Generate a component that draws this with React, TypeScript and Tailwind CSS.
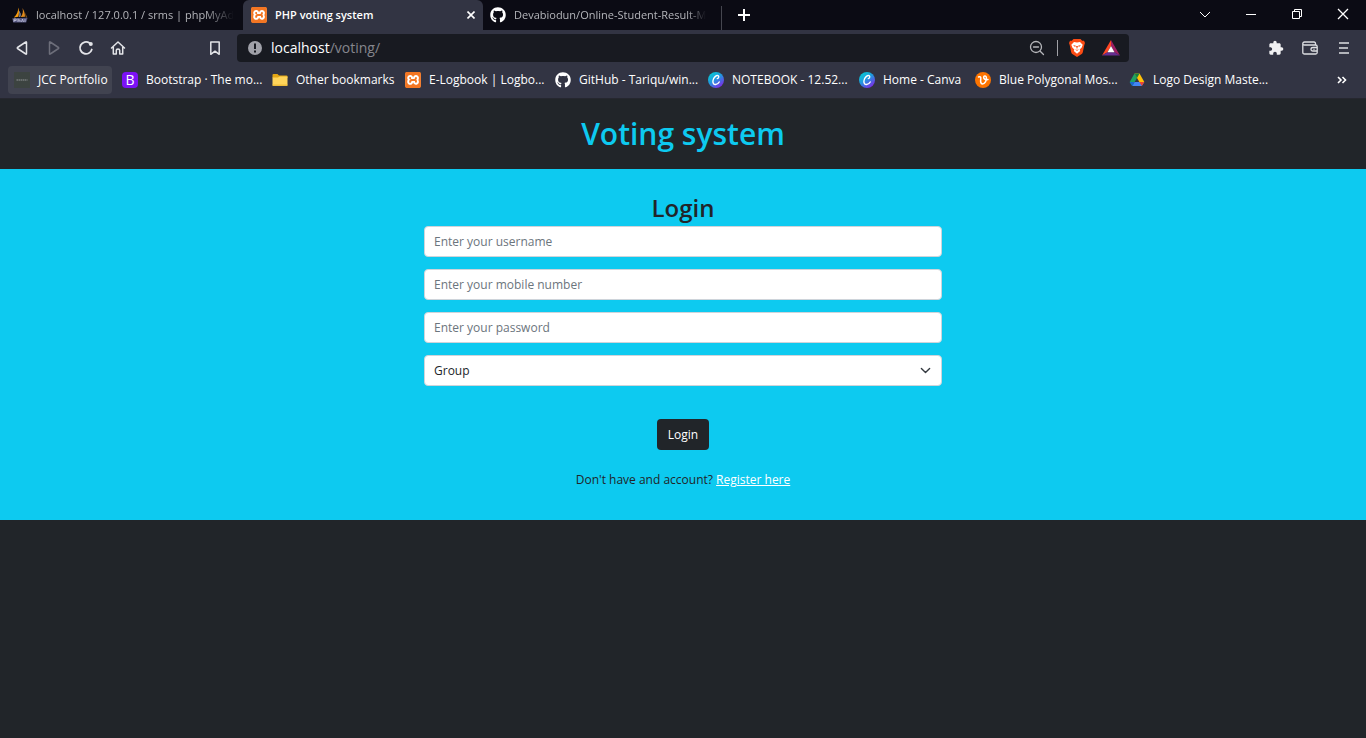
import type { ReactNode } from "react";
import { FaGithub } from "react-icons/fa";
import { SiXampp } from "react-icons/si";
import { MdExtension } from "react-icons/md";

function PhpMyAdminIcon() {
  return (
    <svg className="size-4 shrink-0" viewBox="0 0 16 16">
      <path d="M6.2.5C6.4 4 5 7.500 1.800 10.500L6.400 9.800C7.200 6 7.200 3 6.200.5Z" fill="#f89c0e" />
      <path d="M10.400 1C11.400 4 11 7 8.800 10L13 9.700C13 6.500 12.200 3.500 10.400 1Z" fill="#e08a1c" />
      <path d="M6.800 3.500C7.800 6 7.700 8 7.200 9.800L8.200 9.900C9 7.500 8.600 5.500 6.800 3.500Z" fill="#c8ccd8" />
      <path d="M13.200 5.500L15 10.500L13.800 10.300Z" fill="#b97519" />
      <path d="M.3 11.200L15.600 10.800L14.200 15.400H1.200Z" fill="#55567f" />
      <path d="M2 15V12H4.200V13.500H2M6 11.500V15M6 13H8V15M9.500 15L10.500 12L11.500 15M13 12V15" stroke="#c4c5dc" strokeWidth=".8" fill="none" />
    </svg>
  );
}

function XamppIcon() {
  return (
    <span className="flex size-4 shrink-0 rounded-sm bg-white">
      <SiXampp className="size-4 text-[#f37623]" />
    </span>
  );
}

function GithubIcon() {
  return <FaGithub className="size-4 shrink-0 text-white" />;
}

function PortfolioIcon() {
  return (
    <svg className="size-4 shrink-0" viewBox="0 0 16 16">
      <path d="M0 0H16V16H0Z" fill="#3c4340" />
      <path d="M2.500 8H13.500" stroke="#757b7a" strokeWidth="1.500" strokeDasharray="1.500 .5" />
    </svg>
  );
}

function BootstrapIcon() {
  return (
    <span className="flex size-4 shrink-0 items-center justify-center rounded-sm bg-[#7c12f5] text-sm leading-4 text-white">
      B
    </span>
  );
}

function FolderIcon() {
  return (
    <svg className="size-4 shrink-0" viewBox="0 0 16 16">
      <path d="M.5 3Q.5 2 1.500 2H5.500L7 3.500H14.500Q15.500 3.500 15.500 4.500V6H.5Z" fill="#e3a615" />
      <path d="M.5 5.500H6L7.500 4.500H15.500V13Q15.500 14 14.500 14H1.500Q.5 14 .5 13Z" fill="#ffd45a" />
      <path d="M.5 12.500H15.500V13Q15.500 14 14.500 14H1.500Q.5 14 .5 13Z" fill="#f0bd3a" />
    </svg>
  );
}

function CanvaIcon() {
  return (
    <svg className="size-4 shrink-0" viewBox="0 0 16 16">
      <defs>
        <linearGradient id="canva" x1="0" y1="0" x2=".7" y2="1">
          <stop offset="0" stopColor="#00d8cf" />
          <stop offset=".5" stopColor="#1f9be0" />
          <stop offset="1" stopColor="#7d2ae8" />
        </linearGradient>
      </defs>
      <circle cx="8" cy="8" r="8" fill="url(#canva)" />
      <path d="M9.300 6.600C10.500 6.400 11.200 4.600 10.300 3.800C8.800 2.700 5.200 5.400 4.900 9C4.700 11.500 6 12.600 7.500 12.500C9.200 12.400 10.600 11.200 11.200 10" fill="none" stroke="#fff" strokeWidth="1.400" strokeLinecap="round" />
    </svg>
  );
}

function VecteezyIcon() {
  return (
    <svg className="size-4 shrink-0" viewBox="0 0 16 16">
      <circle cx="8" cy="8" r="8" fill="#fd7400" />
      <path d="M3.500 5C5.200 4.200 6 5 5.800 6.800C5.400 9.200 5.500 11.900 7.500 12C10 12 11.600 8.500 11.400 5.800C11.300 3.500 9 3.300 8.700 5.200C8.500 7.200 10.500 8 13 7.500" fill="none" stroke="#fff" strokeWidth="1.500" strokeLinecap="round" />
    </svg>
  );
}

function DriveIcon() {
  return (
    <svg className="size-4 shrink-0" viewBox="0 0 16 16">
      <path d="M5.500 1.500L8 6L3.200 14L.7 10Z" fill="#1ea362" />
      <path d="M5.500 1.500H10.500L15.300 10H10.300Z" fill="#ffc107" />
      <path d="M5.500 1.500H10.500L8 6Z" fill="#11803f" />
      <path d="M3.200 14L5.500 10H15.300L12.800 14Z" fill="#4285f4" />
      <path d="M10.300 10H15.300L12.800 14Z" fill="#ea4335" />
      <path d="M.7 10H5.500L3.200 14Z" fill="#1967d2" />
    </svg>
  );
}

function BraveIcon() {
  return (
    <svg className="size-5" viewBox="0 0 20 20">
      <path d="M6.500 1H13.500L15.200 2.700L17 2.800L18 5L17.300 7L15.800 14.200Q15.500 15.500 14.300 16.300L10 19L5.700 16.300Q4.500 15.500 4.200 14.200L2.700 7L2 5L3 2.800L4.800 2.700Z" fill="#fb4b14" />
      <path d="M7 4L10 4.600L13 4L15.700 6.800L14.700 9.400L12.700 11.500L13.200 13L10 15.800L6.800 13L7.300 11.500L5.300 9.400L4.300 6.800Z" fill="#fff" />
      <path d="M6 7L9 7.700L8 9ZM14 7L11 7.700L12 9ZM9 8L10 11.300L11 8M8 11L10 13L12 11L10 12Z" fill="#fb4b14" />
    </svg>
  );
}

function BatIcon() {
  return (
    <svg className="size-5" viewBox="0 0 20 20">
      <path d="M10 2L1 17.500L6.500 14.200L10 8Z" fill="#ff4724" />
      <path d="M10 2L19 17.500L13.500 14.200L10 8Z" fill="#9e1f63" />
      <path d="M1 17.500H19L13.500 14.200H6.500Z" fill="#662d91" />
      <path d="M10 8L13.500 14.200H6.500Z" fill="#fff" />
    </svg>
  );
}

function Glyph({ children, className = "text-[#e3e4e8]" }: { children: ReactNode; className?: string }) {
  return (
    <svg
      className={`size-4 ${className}`}
      viewBox="0 0 16 16"
      fill="none"
      stroke="currentColor"
      strokeWidth="1.500"
      strokeLinejoin="round"
      strokeLinecap="round"
    >
      {children}
    </svg>
  );
}

function IconButton({ label, children, disabled }: { label: string; children: ReactNode; disabled?: boolean }) {
  return (
    <button type="button" aria-label={label} disabled={disabled} className="flex h-7 w-8 shrink-0 items-center justify-center">
      {children}
    </button>
  );
}

function WindowButton({ label, children }: { label: string; children: ReactNode }) {
  return (
    <button type="button" aria-label={label} className="flex h-7 w-[46px] shrink-0 items-center justify-center text-white">
      <svg className="size-3" viewBox="0 0 12 12" fill="none" stroke="currentColor">
        {children}
      </svg>
    </button>
  );
}

function TabStrip() {
  return (
    <div className="flex h-[30px] bg-[#0b0b14] text-[11px] text-[#b4b5ba]">
      <button type="button" className="flex w-[243px] items-center gap-2 pl-3 text-left">
        <PhpMyAdminIcon />
        <span className="whitespace-nowrap mask-r-from-85%">localhost / 127.0.0.1 / srms | phpMyAd</span>
      </button>
      <div className="flex w-60 items-center rounded-t-md bg-[#323443] pr-1 pl-2 text-white">
        <button type="button" className="flex flex-1 items-center gap-2 text-left font-semibold">
          <XamppIcon />
          PHP voting system
        </button>
        <button type="button" aria-label="Close tab" className="flex size-4 items-center justify-center">
          <svg className="size-2" viewBox="0 0 8 8" stroke="currentColor" strokeWidth="1.600">
            <path d="M.5 .5L7.500 7.500M7.500 .5L.5 7.500" />
          </svg>
        </button>
      </div>
      <div className="flex w-[239px] items-end">
        <button type="button" className="flex h-full min-w-0 flex-1 items-center gap-2 pr-1 pl-[7px] text-left">
          <GithubIcon />
          <span className="whitespace-nowrap mask-r-from-90%">Devabiodun/Online-Student-Result-M</span>
        </button>
        <span className="h-6 w-px bg-[#45464f]" />
      </div>
      <button type="button" aria-label="New tab" className="flex w-11 items-center justify-center text-white">
        <svg className="size-3" viewBox="0 0 12 12" stroke="currentColor" strokeWidth="2">
          <path d="M6 0V12M0 6H12" />
        </svg>
      </button>
      <div className="ml-auto flex">
        <WindowButton label="Search tabs">
          <path d="M1 4L6 9L11 4" />
        </WindowButton>
        <WindowButton label="Minimize">
          <path d="M1 6.500H11" />
        </WindowButton>
        <WindowButton label="Restore">
          <path d="M1.500 3.500H8.500V10.500H1.500ZM3.500 3.500V1.500H10.500V8.500H8.500" />
        </WindowButton>
        <WindowButton label="Close">
          <path d="M1 1L11 11M11 1L1 11" strokeWidth="1.300" />
        </WindowButton>
      </div>
    </div>
  );
}

function Toolbar() {
  return (
    <div className="flex h-9 items-center px-1.5">
      <IconButton label="Back">
        <Glyph>
          <path d="M12.500 2.300V13.700Q12.500 14.500 11.800 14L3.500 8.500Q2.900 8 3.500 7.500L11.800 2Q12.500 1.500 12.500 2.300Z" />
        </Glyph>
      </IconButton>
      <IconButton label="Forward" disabled>
        <Glyph className="text-[#6d6e7a]">
          <path d="M3.500 2.300V13.700Q3.500 14.500 4.200 14L12.500 8.500Q13.100 8 12.500 7.500L4.200 2Q3.500 1.500 3.500 2.300Z" />
        </Glyph>
      </IconButton>
      <IconButton label="Reload">
        <Glyph>
          <path d="M13.800 9.500A6 6 0 1 1 11.500 3" strokeWidth="1.800" />
          <circle cx="12.800" cy="4" r="2" fill="currentColor" stroke="none" />
        </Glyph>
      </IconButton>
      <IconButton label="Home">
        <Glyph>
          <path d="M1.500 8L8 2L14.500 8M3.300 7V14H6.300V10.200Q6.300 9 8 9T9.700 10.200V14H12.700V7" />
        </Glyph>
      </IconButton>
      <div className="ml-[65px]">
        <IconButton label="Bookmark this page">
          <Glyph>
            <path d="M3.800 2H12.200V14.300L8 11.200L3.800 14.300Z" />
          </Glyph>
        </IconButton>
      </div>
      <div className="ml-1.5 flex h-7 flex-1 items-center rounded bg-[#181a21] pr-px">
        <button type="button" aria-label="Site information" className="flex w-[34px] justify-center pl-0.5">
          <svg className="size-3.5" viewBox="0 0 14 14">
            <circle cx="7" cy="7" r="7" fill="#a0a1a9" />
            <path d="M7 2.500V8M7 9.500V11.500" stroke="#181a21" strokeWidth="2" />
          </svg>
        </button>
        <div className="flex-1 text-sm text-[#85868d]">
          <span className="text-white">localhost</span>/voting/
        </div>
        <IconButton label="Zoom">
          <Glyph className="text-[#b5b6ba]">
            <circle cx="7" cy="7" r="5.500" strokeWidth="1.300" />
            <path d="M11.200 11.200L14.500 14.500M4.500 7H9.500" strokeWidth="1.300" />
          </Glyph>
        </IconButton>
        <span className="mx-1 h-4 w-px bg-[#a0a1a6]" />
        <button type="button" aria-label="Brave Shields" className="flex w-[30px] justify-center">
          <BraveIcon />
        </button>
        <button type="button" aria-label="Brave Rewards" className="ml-0.5 flex w-[34px] justify-center">
          <BatIcon />
        </button>
      </div>
      <div className="ml-[131px] flex gap-0.5">
        <IconButton label="Extensions">
          <MdExtension className="size-4 text-[#f0f0f2]" />
        </IconButton>
        <IconButton label="Wallet">
          <svg className="size-4 text-[#dddee2]" viewBox="0 0 16 16" fill="none" stroke="currentColor" strokeWidth="1.300">
            <path d="M13.500 5V3.500Q13.500 2 12 2H2.500Q.8 2 .8 3.500T2.500 5H13.500Q15.200 5 15.200 6.500V12.500Q15.200 14 13.700 14H2.500Q.8 14 .8 12.500V3.500M15.200 7.500H11Q9 7.500 9 9.300T11 11H15.200M11.500 9.300H12.500" />
          </svg>
        </IconButton>
        <IconButton label="Menu">
          <svg className="size-4 text-[#dddee2]" viewBox="0 0 16 16" stroke="currentColor" strokeWidth="1.600">
            <path d="M3 3H13M3 8H12M3 13H13" />
          </svg>
        </IconButton>
      </div>
    </div>
  );
}

const bookmarks: { label: string; icon: ReactNode; className: string }[] = [
  { label: "JCC Portfolio", icon: <PortfolioIcon />, className: "w-[104px] bg-[#414350]" },
  { label: "Bootstrap · The mo...", icon: <BootstrapIcon />, className: "w-[146px]" },
  { label: "Other bookmarks", icon: <FolderIcon />, className: "w-[129px]" },
  { label: "E-Logbook | Logbo...", icon: <XamppIcon />, className: "w-[146px]" },
  { label: "GitHub - Tariqu/win...", icon: <GithubIcon />, className: "w-[149px]" },
  { label: "NOTEBOOK - 12.52...", icon: <CanvaIcon />, className: "w-[147px]" },
  { label: "Home - Canva", icon: <CanvaIcon />, className: "w-[112px]" },
  { label: "Blue Polygonal Mos...", icon: <VecteezyIcon />, className: "w-[150px]" },
  { label: "Logo Design Maste...", icon: <DriveIcon />, className: "w-[148px]" },
];

function BookmarksBar() {
  return (
    <nav aria-label="Bookmarks" className="flex h-8 items-start gap-1 pr-4 pl-2 text-xs text-white">
      {bookmarks.map((b) => (
        <a key={b.label} href="#" className={`flex h-7 shrink-0 items-center gap-2 rounded pl-1.5 whitespace-nowrap ${b.className}`}>
          {b.icon}
          {b.label}
        </a>
      ))}
      <button type="button" aria-label="More bookmarks" className="ml-auto flex h-7 w-4 items-center justify-center">
        <svg className="size-2.5" viewBox="0 0 10 10" fill="none" stroke="currentColor" strokeWidth="1.600">
          <path d="M1 2L4 5L1 8M5.500 2L8.500 5L5.500 8" />
        </svg>
      </button>
    </nav>
  );
}

const fieldClass =
  "h-[31px] w-full rounded border border-[#ced4da] bg-white px-[9px] text-xs text-[#212529] placeholder:text-[#6c757d]";

function LoginForm() {
  return (
    <section className="bg-[#0dcaf0] px-4 pt-5 pb-[30px] text-center">
      <h2 className="text-2xl leading-[37px] font-semibold">Login</h2>
      <form className="mx-auto flex w-full max-w-[518px] flex-col items-center gap-3" onSubmit={(e) => e.preventDefault()}>
        <input type="text" aria-label="Username" placeholder="Enter your username" className={fieldClass} />
        <input type="text" aria-label="Mobile number" placeholder="Enter your mobile number" className={fieldClass} />
        <input type="password" aria-label="Password" placeholder="Enter your password" className={fieldClass} />
        <div className="relative w-full">
          <select aria-label="Group" className={`${fieldClass} appearance-none`}>
            <option>Group</option>
            <option>Voter</option>
          </select>
          <svg
            className="pointer-events-none absolute top-2.5 right-[11px] size-[11px]"
            viewBox="0 0 16 16"
            fill="none"
            stroke="#343a40"
            strokeWidth="2"
            strokeLinecap="round"
            strokeLinejoin="round"
          >
            <path d="M2 5L8 11L14 5" />
          </svg>
        </div>
        <button type="submit" className="mt-[21px] h-[31px] rounded bg-[#212529] px-[11px] text-xs text-white">
          Login
        </button>
        <p className="mt-2 text-xs leading-5">
          Don't have and account?{" "}
          <a href="#" className="text-white underline">
            Register here
          </a>
        </p>
      </form>
    </section>
  );
}

export default function App() {
  return (
    <div className="flex min-h-screen flex-col bg-[#212529] font-['Open_Sans',sans-serif] text-[#212529]">
      <header className="border-b border-[#26272f] bg-[#323443]">
        <TabStrip />
        <Toolbar />
        <BookmarksBar />
      </header>
      <main>
        <h1 className="py-4 text-center text-3xl leading-[38px] font-semibold text-[#0dcaf0]">Voting system</h1>
        <LoginForm />
      </main>
    </div>
  );
}
